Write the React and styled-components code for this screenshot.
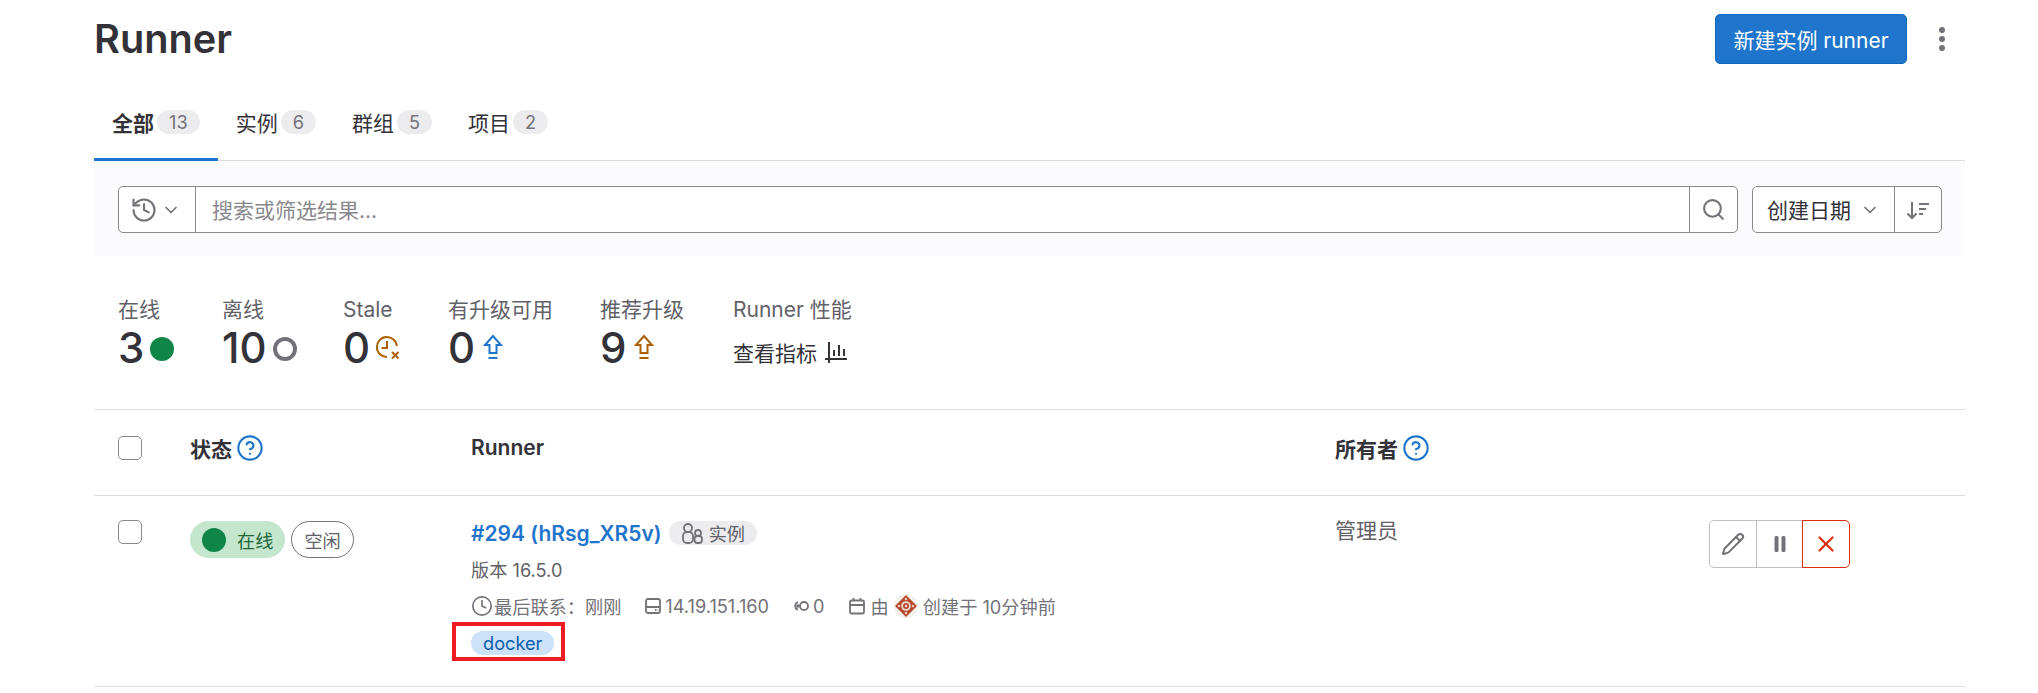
import styled, { createGlobalStyle } from "styled-components";
import { ChevronDown, CircleHelp, Clock, History, Pencil, Search, X } from "lucide-react";

const Global = createGlobalStyle`
  html, body { margin: 0; background: #fff; }
  body {
    font-family: "Inter", "Noto Sans CJK SC", sans-serif;
    font-size: 21px;
    color: #333238;
    overflow: hidden;
  }
  * { box-sizing: border-box; }
`;

const SortIcon = () => (
  <svg width="26" height="26" viewBox="0 0 26 26" fill="none" stroke="#737278" strokeWidth="2">
    <path d="M7 5v16M2.500 16.500 7 21l4.500-4.500M14 7h10M14 12h7M14 17h4" />
  </svg>
);

const DotsIcon = () => (
  <svg width="8" height="26" viewBox="0 0 8 26" fill="#737278">
    <circle cx="4" cy="4" r="3" />
    <circle cx="4" cy="13" r="3" />
    <circle cx="4" cy="22" r="3" />
  </svg>
);

const StaleIcon = () => (
  <svg width="26" height="26" viewBox="0 0 26 26" fill="none" stroke="#ab6100" strokeWidth="2">
    <path d="M22.800 12A10 10 0 1 0 13 23M13 7v7H7.500M18 18l6.500 6.500M24.500 18 18 24.500" />
  </svg>
);

const UpgradeIcon = ({ color }) => (
  <svg width="20" height="26" viewBox="0 0 20 26" fill="none" stroke={color} strokeWidth="2">
    <path d="M10 2 2 11h4.500v8h7v-8H18z" />
    <path d="M5.500 24h9" />
  </svg>
);

const ChartIcon = () => (
  <svg width="24" height="24" viewBox="0 0 24 24" fill="none" stroke="#333238" strokeWidth="2">
    <path d="M5 2v21M1 19h22M10 10v6M15 5v11M20 9v7" />
  </svg>
);

const PauseIcon = () => (
  <svg width="24" height="24" viewBox="0 0 24 24" fill="#737278">
    <rect x="6.500" y="4" width="4" height="16" rx="1.500" />
    <rect x="13.500" y="4" width="4" height="16" rx="1.500" />
  </svg>
);

const InstanceIcon = () => (
  <svg width="23" height="23" viewBox="0 0 23 23" fill="none" stroke="#737278" strokeWidth="1.800">
    <circle cx="7" cy="6" r="4" />
    <rect x="2" y="10" width="10" height="11" rx="4" />
    <circle cx="17" cy="11" r="3" />
    <rect x="13.500" y="14" width="7.500" height="7" rx="3" />
  </svg>
);

const DiskIcon = () => (
  <svg width="18" height="18" viewBox="0 0 18 18" fill="none" stroke="#737278" strokeWidth="1.800">
    <rect x="2" y="2" width="14" height="14" rx="2" />
    <path d="M2 10h14M11 13h1.500M13.800 13h.5" />
  </svg>
);

const JobsIcon = () => (
  <svg width="18" height="18" viewBox="0 0 18 18" fill="none" stroke="#737278" strokeWidth="1.800">
    <circle cx="12" cy="9" r="4" />
    <path d="M6 5.200a4 4 0 0 0 0 7.600" />
    <circle cx="6" cy="9" r=".8" />
  </svg>
);

const CalendarIcon = () => (
  <svg width="18" height="18" viewBox="0 0 18 18" fill="none" stroke="#737278" strokeWidth="1.800">
    <rect x="2" y="3.500" width="14" height="13" rx="1.500" />
    <path d="M2 8h14M5.500 1v3M12.500 1v3" />
  </svg>
);

const Avatar = () => (
  <svg width="24" height="24" viewBox="0 0 24 24">
    <circle cx="12" cy="12" r="12" fill="#f4f0ee" />
    <path d="M12 1 23 12 12 23 1 12z" fill="#b5492c" />
    <path d="M12 3.500 13.500 5 12 6.500 10.500 5zM12 17.500 13.500 19 12 20.500 10.500 19zM5 10.500 6.500 12 5 13.500 3.500 12zM19 10.500 20.500 12 19 13.500 17.500 12z" fill="#f1d9cf" />
    <circle cx="12" cy="12" r="4.800" fill="#f1d9cf" />
    <circle cx="12" cy="12" r="3" fill="#b5492c" />
    <circle cx="12" cy="12" r="1.200" fill="#f1d9cf" />
  </svg>
);

const Page = styled.div`
  width: 2038px;
  height: 693px;
  padding: 0 73px 0 94px;
`;

const Header = styled.header`
  display: flex;
  align-items: center;
  justify-content: space-between;
  height: 78px;
  padding-right: 19px;
`;

const Title = styled.h1`
  margin: 0;
  font-size: 39.700px;
  font-weight: 600;
`;

const HeaderActions = styled.div`
  display: flex;
  align-items: center;
  gap: 31px;
`;

const PrimaryButton = styled.button`
  height: 50px;
  width: 192px;
  padding: 0;
  border: 1px solid #1068bf;
  border-radius: 5px;
  background: #1f75cb;
  color: #fff;
  font: inherit;
`;

const Tabs = styled.nav`
  display: flex;
  height: 83px;
  border-bottom: 1px solid #dcdcde;
`;

const Tab = styled.a`
  display: flex;
  align-items: center;
  gap: 3px;
  height: 83px;
  padding: 8px 18px 0;
  font-weight: ${(p) => (p.$active ? 600 : 400)};
  border-bottom: 3px solid ${(p) => (p.$active ? "#1f75cb" : "transparent")};
`;

const Count = styled.span`
  display: inline-block;
  min-width: 30px;
  height: 24px;
  padding: 0 12px;
  border-radius: 12px;
  background: #ececef;
  color: #737278;
  font-size: 18.200px;
  font-weight: 400;
  line-height: 24px;
  text-align: center;
`;

const FilterBar = styled.div`
  display: flex;
  gap: 14px;
  height: 95px;
  padding: 25px 23px 0 24px;
  background: #fbfafd;
`;

const Segmented = styled.div`
  display: flex;
  height: 47px;
  flex: ${(p) => (p.$grow ? 1 : "none")};
  border: 1px solid #89888d;
  border-radius: 5px;
  background: #fff;
`;

const Segment = styled.div`
  display: flex;
  align-items: center;
  justify-content: center;
  gap: ${(p) => p.$gap || 3}px;
  width: ${(p) => p.$width}px;
  padding-right: ${(p) => p.$shift || 0}px;
  color: #737278;
  & + & { border-left: 1px solid #89888d; }
`;

const Placeholder = styled.div`
  flex: 1;
  display: flex;
  align-items: center;
  padding: 0 0 2px 16px;
  color: #89888d;
  border-left: 1px solid #89888d;
  border-right: 1px solid #89888d;
`;

const SortLabel = styled.span`
  color: #333238;
  margin-bottom: 2px;
`;

const Stats = styled.section`
  display: flex;
  height: 153px;
  padding: 41px 0 0 24px;
`;

const Stat = styled.div`
  width: ${(p) => p.$width}px;
`;

const StatLabel = styled.div`
  height: 26px;
  line-height: 26px;
  color: #626168;
`;

const StatValue = styled.div`
  display: flex;
  align-items: center;
  gap: ${(p) => p.$gap || 6}px;
  height: 48px;
  font-size: 42px;
  font-weight: 500;
`;

const Dot = styled.span`
  width: 24px;
  height: 24px;
  margin-top: 3px;
  border-radius: 50%;
  background: ${(p) => (p.$hollow ? "transparent" : "#108548")};
  border: ${(p) => (p.$hollow ? "4px solid #737278" : "none")};
`;

const MetricLink = styled.div`
  display: flex;
  align-items: center;
  gap: 7px;
  height: 48px;
  padding-top: 10px;
`;

const Row = styled.div`
  display: grid;
  grid-template-columns: 72px 281px 864px 375px 1fr;
  padding-left: 24px;
  border-top: 1px solid #dcdcde;
`;

const HeadRow = styled(Row)`
  height: 86px;
  align-items: center;
  padding-bottom: 10px;
  font-weight: 600;
`;

const BodyRow = styled(Row)`
  height: 192px;
  padding-top: 24px;
  border-bottom: 1px solid #dcdcde;
`;

const HeadCell = styled.div`
  display: flex;
  align-items: center;
  gap: 4px;
`;

const Box = styled.span`
  display: block;
  width: 24px;
  height: 24px;
  border: 1px solid #89888d;
  border-radius: 5px;
  background: #fff;
`;

const StatusCell = styled.div`
  display: flex;
  gap: 6px;
  align-items: flex-start;
  padding-top: 1px;
`;

const OnlineBadge = styled.span`
  display: flex;
  align-items: center;
  gap: 11px;
  height: 37px;
  padding: 0 12px;
  border-radius: 19px;
  background: #c3e6cd;
  color: #24663b;
  font-size: 18.200px;
`;

const BadgeDot = styled.span`
  width: 24px;
  height: 24px;
  border-radius: 50%;
  background: #108548;
`;

const IdleBadge = styled.span`
  display: flex;
  align-items: center;
  height: 37px;
  padding: 0 12px;
  border: 1px solid #737278;
  border-radius: 19px;
  color: #626168;
  font-size: 18.200px;
`;

const RunnerCell = styled.div`
  display: flex;
  flex-direction: column;
  align-items: flex-start;
`;

const RunnerTitle = styled.div`
  display: flex;
  align-items: center;
  gap: 7px;
  height: 26px;
`;

const RunnerLink = styled.a`
  color: #1f75cb;
  font-weight: 600;
`;

const TypeBadge = styled.span`
  display: flex;
  align-items: center;
  gap: 5px;
  height: 24px;
  padding: 0 12px;
  border-radius: 12px;
  background: #ececef;
  color: #626168;
  font-size: 18.200px;
`;

const Version = styled.div`
  margin-top: 11px;
  height: 26px;
  line-height: 26px;
  color: #626168;
  font-size: 18.200px;
`;

const Meta = styled.div`
  display: flex;
  align-items: center;
  gap: 23px;
  height: 26px;
  margin-top: 10px;
  color: #737278;
  font-size: 18.200px;
`;

const MetaItem = styled.span`
  display: flex;
  align-items: center;
  gap: ${(p) => p.$gap || 3}px;
`;

const TagWrap = styled.div`
  position: relative;
  margin-top: 12px;
`;

const Tag = styled.span`
  display: block;
  height: 24px;
  padding: 0 12px;
  border-radius: 12px;
  background: #cbe2f9;
  color: #0b5cad;
  font-size: 18.200px;
  line-height: 24px;
`;

const Highlight = styled.span`
  position: absolute;
  inset: -9px -11px -6px -19px;
  border: 4px solid #ee1c25;
`;

const Owner = styled.div`
  color: #626168;
  line-height: 21px;
`;

const ActionGroup = styled.div`
  display: flex;
  height: 48px;
  width: 140px;
`;

const ActionButton = styled.div`
  display: flex;
  align-items: center;
  justify-content: center;
  flex: 1;
  margin-left: -1px;
  border: 1px solid ${(p) => (p.$danger ? "#dd2b0e" : "#bfbfc3")};
  color: ${(p) => (p.$danger ? "#dd2b0e" : "#737278")};
  z-index: ${(p) => (p.$danger ? 1 : 0)};
  &:first-child { border-radius: 5px 0 0 5px; }
  &:last-child { border-radius: 0 5px 5px 0; }
`;

export default function App() {
  return (
    <Page>
      <Global />
      <Header>
        <Title>Runner</Title>
        <HeaderActions>
          <PrimaryButton>新建实例 runner</PrimaryButton>
          <DotsIcon />
        </HeaderActions>
      </Header>
      <Tabs>
        <Tab $active>全部<Count>13</Count></Tab>
        <Tab>实例<Count>6</Count></Tab>
        <Tab>群组<Count>5</Count></Tab>
        <Tab>项目<Count>2</Count></Tab>
      </Tabs>
      <FilterBar>
        <Segmented $grow>
          <Segment $width={76} $shift={4}>
            <History size={28} strokeWidth={1.800} />
            <ChevronDown size={20} />
          </Segment>
          <Placeholder>搜索或筛选结果...</Placeholder>
          <Segment $width={47}>
            <Search size={25} />
          </Segment>
        </Segmented>
        <Segmented>
          <Segment $width={141} $gap={9}>
            <SortLabel>创建日期</SortLabel>
            <ChevronDown size={20} />
          </Segment>
          <Segment $width={47}>
            <SortIcon />
          </Segment>
        </Segmented>
      </FilterBar>
      <Stats>
        <Stat $width={104}>
          <StatLabel>在线</StatLabel>
          <StatValue><span>3</span><Dot /></StatValue>
        </Stat>
        <Stat $width={121}>
          <StatLabel>离线</StatLabel>
          <StatValue><span>10</span><Dot $hollow /></StatValue>
        </Stat>
        <Stat $width={105}>
          <StatLabel>Stale</StatLabel>
          <StatValue $gap={4}><span>0</span><StaleIcon /></StatValue>
        </Stat>
        <Stat $width={152}>
          <StatLabel>有升级可用</StatLabel>
          <StatValue $gap={8}><span>0</span><UpgradeIcon color="#1f75cb" /></StatValue>
        </Stat>
        <Stat $width={133}>
          <StatLabel>推荐升级</StatLabel>
          <StatValue $gap={8}><span>9</span><UpgradeIcon color="#ab6100" /></StatValue>
        </Stat>
        <Stat $width={200}>
          <StatLabel>Runner 性能</StatLabel>
          <MetricLink>查看指标<ChartIcon /></MetricLink>
        </Stat>
      </Stats>
      <HeadRow>
        <Box />
        <HeadCell>状态<CircleHelp size={28} strokeWidth={1.800} color="#1f75cb" /></HeadCell>
        <HeadCell>Runner</HeadCell>
        <HeadCell>所有者<CircleHelp size={28} strokeWidth={1.800} color="#1f75cb" /></HeadCell>
      </HeadRow>
      <BodyRow>
        <Box />
        <StatusCell>
          <OnlineBadge><BadgeDot />在线</OnlineBadge>
          <IdleBadge>空闲</IdleBadge>
        </StatusCell>
        <RunnerCell>
          <RunnerTitle>
            <RunnerLink>#294 (hRsg_XR5v)</RunnerLink>
            <TypeBadge><InstanceIcon />实例</TypeBadge>
          </RunnerTitle>
          <Version>版本 16.5.0</Version>
          <Meta>
            <MetaItem $gap={1}><Clock size={22} strokeWidth={1.800} />最后联系：刚刚</MetaItem>
            <MetaItem><DiskIcon />14.19.151.160</MetaItem>
            <MetaItem><JobsIcon />0</MetaItem>
            <MetaItem $gap={5}><CalendarIcon />由<Avatar />创建于 10分钟前</MetaItem>
          </Meta>
          <TagWrap>
            <Tag>docker</Tag>
            <Highlight />
          </TagWrap>
        </RunnerCell>
        <Owner>管理员</Owner>
        <ActionGroup>
          <ActionButton><Pencil size={24} /></ActionButton>
          <ActionButton><PauseIcon /></ActionButton>
          <ActionButton $danger><X size={26} /></ActionButton>
        </ActionGroup>
      </BodyRow>
    </Page>
  );
}
